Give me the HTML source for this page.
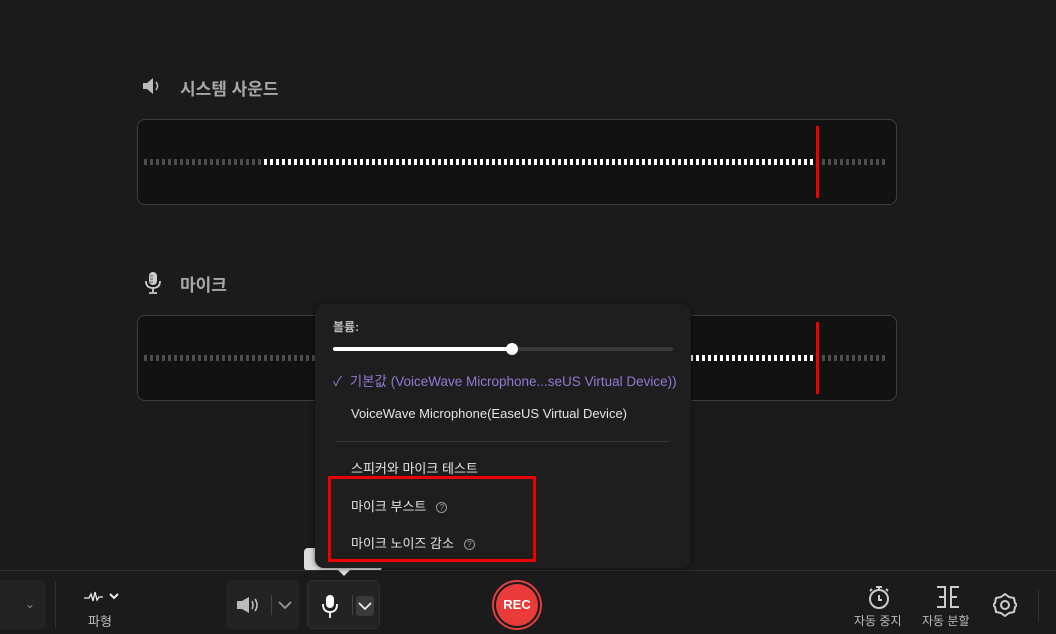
<!DOCTYPE html>
<html><head><meta charset="utf-8"><style>
*{margin:0;padding:0;box-sizing:border-box}
body{width:1056px;height:634px;background:#1b1b1b;position:relative;overflow:hidden;font-family:"Liberation Sans","Noto Sans CJK KR",sans-serif;color:#ddd}
.abs{position:absolute}
.title{font-size:17px;font-weight:bold;color:#a8a8a8}
.box{position:absolute;left:137px;width:760px;height:86px;background:#121212;border:1px solid #3e3e3e;border-radius:8px}
.bars{position:absolute;top:39px;height:6px}
.g{background:repeating-linear-gradient(90deg,#4d4d4d 0 3px,transparent 3px 6px)}
.w{background:repeating-linear-gradient(90deg,#fff 0 3px,transparent 3px 6px)}
.red{position:absolute;width:3px;background:#e00;top:6px;height:72px}
.pop{left:315px;top:304px;width:376px;height:264px;background:#1e1e1e;border-radius:9px;box-shadow:0 0 6px rgba(0,0,0,.6);z-index:2}
.item{position:absolute;font-size:13px;color:#e4e4e4;white-space:nowrap}
.q{display:inline-block;width:11px;height:11px;border:1px solid #999;border-radius:50%;font-size:8px;line-height:9px;text-align:center;color:#999;vertical-align:1px;margin-left:10px}
.btn{position:absolute;background:#232323;border-radius:6px}
.lbl{position:absolute;font-size:12px;color:#bbb;white-space:nowrap}
</style></head><body>
<svg class="abs" style="left:142px;top:77px" width="20" height="18" viewBox="0 0 20 18"><path d="M1 6h4l6-5v16l-6-5H1z" fill="#bbb"/><path d="M14 5q3 4 0 8" stroke="#bbb" stroke-width="1.6" fill="none"/></svg>
<div class="abs title" style="left:180px;top:75px">시스템 사운드</div>
<div class="box" style="top:119px">
 <div class="bars g" style="left:6px;width:120px"></div>
 <div class="bars w" style="left:126px;width:552px"></div>
 <div class="bars g" style="left:678px;width:70px"></div>
 <div class="red" style="left:678px"></div>
</div>
<svg class="abs" style="left:144px;top:271px" width="18" height="24" viewBox="0 0 18 24"><rect x="5" y="1" width="8" height="13" rx="4" fill="#ccc"/><path d="M2 10q0 7 7 7q7 0 7-7M9 17v4M5 22h8" stroke="#ccc" stroke-width="1.8" fill="none"/><path d="M6 5h3M6 8h3M6 11h3" stroke="#555" stroke-width="1"/></svg>
<div class="abs title" style="left:180px;top:271px">마이크</div>
<div class="box" style="top:315px">
 <div class="bars g" style="left:6px;width:450px"></div>
 <div class="bars w" style="left:456px;width:222px"></div>
 <div class="bars g" style="left:678px;width:70px"></div>
 <div class="red" style="left:678px"></div>
</div>

<div class="abs pop">
 <div class="item" style="left:18px;top:14px;color:#bbb;font-weight:bold;font-size:12px">볼륨:</div>
 <div class="abs" style="left:18px;top:43px;width:340px;height:4px;background:#3a3a3a;border-radius:2px"></div>
 <div class="abs" style="left:18px;top:43px;width:180px;height:4px;background:#fff;border-radius:2px"></div>
 <div class="abs" style="left:191px;top:39px;width:12px;height:12px;background:#fff;border-radius:50%"></div>
 <div class="item" style="left:18px;top:66px;color:#8d7bd6;font-size:13.5px">✓&nbsp; 기본값 (VoiceWave Microphone...seUS Virtual Device))</div>
 <div class="item" style="left:36px;top:102px">VoiceWave Microphone(EaseUS Virtual Device)</div>
 <div class="abs" style="left:20px;top:137px;width:334px;height:1px;background:#383838"></div>
 <div class="item" style="left:36px;top:154px">스피커와 마이크 테스트</div>
 <div class="item" style="left:36px;top:192px">마이크 부스트<span class="q">?</span></div>
 <div class="item" style="left:36px;top:229px">마이크 노이즈 감소<span class="q">?</span></div>
</div>
<div class="abs" style="left:328px;top:476px;width:208px;height:86px;border:3px solid #e00;z-index:3"></div>

<div class="abs" style="left:304px;top:548px;width:78px;height:23px;background:#ddd;border-radius:4px"></div>
<div class="abs" style="left:0;top:570px;width:1056px;height:1px;background:#303030"></div>
<div class="abs" style="left:338px;top:570px;width:0;height:0;border-left:6px solid transparent;border-right:6px solid transparent;border-top:6px solid #ddd"></div>

<div class="btn" style="left:-10px;top:580px;width:56px;height:49px"></div>
<div class="lbl" style="left:25px;top:597px;color:#888">⌄</div>
<div class="abs" style="left:55px;top:582px;width:1px;height:46px;background:#333"></div>
<svg class="abs" style="left:84px;top:590px" width="40" height="14" viewBox="0 0 40 14"><path d="M0 8h5l2-4 2 7 2-9 2 8 2-3h4" stroke="#eee" stroke-width="1.3" fill="none"/><path d="M26 4l4 4 4-4" stroke="#eee" stroke-width="2" fill="none"/></svg>
<div class="lbl" style="left:88px;top:611px;font-size:13px">파형</div>
<div class="btn" style="left:226px;top:580px;width:73px;height:49px"></div>
<svg class="abs" style="left:236px;top:596px" width="28" height="18" viewBox="0 0 28 18"><path d="M1 5h5l7-4v16l-7-4H1z" fill="#bbb"/><path d="M16 5q2 4 0 8M19 3q4 6 0 12" stroke="#bbb" stroke-width="1.6" fill="none"/></svg>
<div class="abs" style="left:271px;top:595px;width:1px;height:20px;background:#444"></div>
<svg class="abs" style="left:278px;top:600px" width="14" height="10"><path d="M1 2l6 6 6-6" stroke="#999" stroke-width="1.8" fill="none"/></svg>
<div class="btn" style="left:307px;top:580px;width:73px;height:49px;border:1px solid #2e2e2e"></div>
<svg class="abs" style="left:320px;top:594px" width="20" height="26" viewBox="0 0 20 26"><rect x="6" y="1" width="8" height="13" rx="4" fill="#fff"/><path d="M3 10q0 8 7 8q7 0 7-8M10 18v6" stroke="#fff" stroke-width="1.8" fill="none"/></svg>
<div class="abs" style="left:352px;top:595px;width:1px;height:20px;background:#444"></div>
<div class="abs" style="left:356px;top:596px;width:18px;height:20px;background:#3a3a3a;border-radius:3px"></div>
<svg class="abs" style="left:358px;top:601px" width="14" height="10"><path d="M1 2l6 6 6-6" stroke="#eee" stroke-width="1.8" fill="none"/></svg>
<div class="abs" style="left:492px;top:580px;width:50px;height:50px;border-radius:50%;border:2px solid #e04040"></div>
<div class="abs" style="left:496px;top:584px;width:42px;height:42px;border-radius:50%;background:#ea3b3b;color:#fff;font-weight:bold;font-size:13px;text-align:center;line-height:42px">REC</div>

<svg class="abs" style="left:867px;top:585px" width="24" height="25" viewBox="0 0 24 25"><circle cx="12" cy="14" r="9" stroke="#ccc" stroke-width="2" fill="none"/><path d="M9 2h6M12 2v3M12 10v5h3M3 6l2-2M21 6l-2-2" stroke="#ccc" stroke-width="2" fill="none"/></svg>
<div class="lbl" style="left:854px;top:612px">자동 중지</div>
<svg class="abs" style="left:935px;top:585px" width="26" height="24" viewBox="0 0 26 24"><path d="M2 2h8v20H2M24 2h-8v20h8M10 12H4M16 12h6" stroke="#ccc" stroke-width="2" fill="none"/></svg>
<div class="lbl" style="left:922px;top:612px">자동 분할</div>
<svg class="abs" style="left:993px;top:593px" width="24" height="24" viewBox="0 0 24 24"><path d="M12 1l4 3 5 1 1 5 2 2-2 2-1 5-5 1-4 3-4-3-5-1-1-5-2-2 2-2 1-5 5-1z" stroke="#ccc" stroke-width="2" fill="none" stroke-linejoin="round"/><circle cx="12" cy="12" r="4" stroke="#ccc" stroke-width="2" fill="none"/></svg>
<div class="abs" style="left:1038px;top:590px;width:1px;height:32px;background:#333"></div>
</body></html>
